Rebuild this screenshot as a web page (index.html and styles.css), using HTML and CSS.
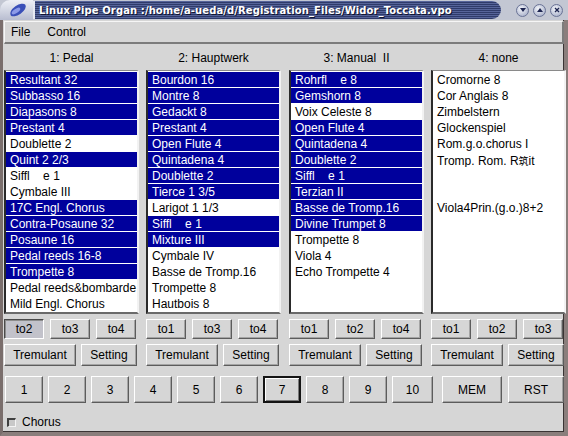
FILE: index.html
```html
<!DOCTYPE html>
<html>
<head>
<meta charset="utf-8">
<title>Linux Pipe Organ</title>
<link rel="stylesheet" href="styles.css">
</head>
<body>
<div class="win">
  <div class="titlebar">
    <div class="tcap">
      <svg width="26" height="18" viewBox="0 0 26 18">
        <ellipse cx="14" cy="9" rx="9" ry="4.5" transform="rotate(-35 14 9)" fill="#3a4fb8"/>
        <ellipse cx="12" cy="10" rx="5" ry="2" transform="rotate(-35 12 10)" fill="#8c9ae8"/>
      </svg>
    </div>
    <div class="tbar"><span class="ttext">Linux Pipe Organ :/home/a-ueda/d/Registration_Files/Widor_Toccata.vpo</span></div>
    <div class="tbtns">
      <span class="tb"><svg width="8" height="8" viewBox="0 0 8 8"><path d="M1 2 L7 2 L4 6 Z" fill="#1c2450"/></svg></span>
      <span class="tb"><svg width="8" height="8" viewBox="0 0 8 8"><path d="M1 6 L7 6 L4 2 Z" fill="#1c2450"/></svg></span>
      <span class="tb"><svg width="8" height="8" viewBox="0 0 8 8"><path d="M2 2 L6 6 M6 2 L2 6" stroke="#1c2450" stroke-width="1.3"/></svg></span>
    </div>
  </div>
  <div class="frame">
    <div class="menubar"><span class="mi">File</span><span class="mi">Control</span></div>
    <div class="cols">
      <div class="col">
        <div class="hdr">1: Pedal</div>
        <div class="list">
          <div class="row sel">Resultant 32</div>
          <div class="row sel">Subbasso 16</div>
          <div class="row sel">Diapasons 8</div>
          <div class="row sel">Prestant 4</div>
          <div class="row">Doublette 2</div>
          <div class="row sel">Quint 2 2/3</div>
          <div class="row">Siffl&nbsp;&nbsp;&nbsp; e 1</div>
          <div class="row">Cymbale III</div>
          <div class="row sel">17C Engl. Chorus</div>
          <div class="row sel">Contra-Posaune 32</div>
          <div class="row sel">Posaune 16</div>
          <div class="row sel">Pedal reeds 16-8</div>
          <div class="row sel">Trompette 8</div>
          <div class="row">Pedal reeds&amp;bombarde</div>
          <div class="row">Mild Engl. Chorus</div>
        </div>
        <div class="brow">
          <div class="btn cp down">to2</div><div class="btn cp">to3</div><div class="btn cp">to4</div>
        </div>
        <div class="brow">
          <div class="btn trem">Tremulant</div><div class="btn setg">Setting</div>
        </div>
      </div>
      <div class="col">
        <div class="hdr">2: Hauptwerk</div>
        <div class="list">
          <div class="row sel">Bourdon 16</div>
          <div class="row sel">Montre 8</div>
          <div class="row sel">Gedackt 8</div>
          <div class="row sel">Prestant 4</div>
          <div class="row sel">Open Flute 4</div>
          <div class="row sel">Quintadena 4</div>
          <div class="row sel">Doublette 2</div>
          <div class="row sel">Tierce 1 3/5</div>
          <div class="row">Larigot 1 1/3</div>
          <div class="row sel">Siffl&nbsp;&nbsp;&nbsp; e 1</div>
          <div class="row sel">Mixture III</div>
          <div class="row">Cymbale IV</div>
          <div class="row">Basse de Tromp.16</div>
          <div class="row">Trompette 8</div>
          <div class="row">Hautbois 8</div>
        </div>
        <div class="brow">
          <div class="btn cp">to1</div><div class="btn cp">to3</div><div class="btn cp">to4</div>
        </div>
        <div class="brow">
          <div class="btn trem">Tremulant</div><div class="btn setg">Setting</div>
        </div>
      </div>
      <div class="col">
        <div class="hdr">3: Manual&nbsp; II</div>
        <div class="list">
          <div class="row sel">Rohrfl&nbsp;&nbsp;&nbsp; e 8</div>
          <div class="row sel">Gemshorn 8</div>
          <div class="row">Voix Celeste 8</div>
          <div class="row sel">Open Flute 4</div>
          <div class="row sel">Quintadena 4</div>
          <div class="row sel">Doublette 2</div>
          <div class="row sel">Siffl&nbsp;&nbsp;&nbsp; e 1</div>
          <div class="row sel">Terzian II</div>
          <div class="row sel">Basse de Tromp.16</div>
          <div class="row sel">Divine Trumpet 8</div>
          <div class="row">Trompette 8</div>
          <div class="row">Viola 4</div>
          <div class="row">Echo Trompette 4</div>
        </div>
        <div class="brow">
          <div class="btn cp">to1</div><div class="btn cp">to2</div><div class="btn cp">to4</div>
        </div>
        <div class="brow">
          <div class="btn trem">Tremulant</div><div class="btn setg">Setting</div>
        </div>
      </div>
      <div class="col">
        <div class="hdr">4: none</div>
        <div class="list">
          <div class="row">Cromorne 8</div>
          <div class="row">Cor Anglais 8</div>
          <div class="row">Zimbelstern</div>
          <div class="row">Glockenspiel</div>
          <div class="row">Rom.g.o.chorus I</div>
          <div class="row">Tromp. Rom. R<span class="cjk">筑</span>it</div>
          <div class="row"></div>
          <div class="row"></div>
          <div class="row">Viola4Prin.(g.o.)8+2</div>
        </div>
        <div class="brow">
          <div class="btn cp">to1</div><div class="btn cp">to2</div><div class="btn cp">to3</div>
        </div>
        <div class="brow">
          <div class="btn trem">Tremulant</div><div class="btn setg">Setting</div>
        </div>
      </div>
    </div>
    <div class="presets">
      <div class="btn pb">1</div>
      <div class="btn pb">2</div>
      <div class="btn pb">3</div>
      <div class="btn pb">4</div>
      <div class="btn pb">5</div>
      <div class="btn pb">6</div>
      <div class="btn pb cur">7</div>
      <div class="btn pb">8</div>
      <div class="btn pb">9</div>
      <div class="btn pb ten">10</div>
      <div class="btn mem">MEM</div>
      <div class="btn rst">RST</div>
    </div>
    <div class="chorus"><span class="cb"></span><span>Chorus</span></div>
  </div>
</div>
</body>
</html>
```

FILE: styles.css
```css
* { box-sizing: border-box; }
html, body { margin: 0; padding: 0; }
body {
  width: 568px;
  height: 436px;
  overflow: hidden;
  background: #d6d6d6;
  font-family: "Liberation Sans", Arial, sans-serif;
  font-size: 12px;
  color: #000;
}
.win {
  width: 568px;
  height: 436px;
  display: flex;
  flex-direction: column;
  background: #d6d6d6;
}

/* title bar */
.titlebar {
  height: 20px;
  display: flex;
  background: #c3c7d3;
  flex: none;
}
.tcap {
  width: 33px;
  height: 20px;
  border-radius: 10px 0 0 0;
  background: linear-gradient(to bottom, #eef0f6, #b8bdd0);
  display: flex;
  align-items: center;
  justify-content: center;
}
.tbar {
  width: 468px;
  height: 18px;
  margin-top: 1px;
  border-radius: 0 9px 9px 0;
  border-left: 2px solid #e6e9f2;
  background: repeating-linear-gradient(to bottom, #56649a 0 1px, #2f3b6a 1px 2px);
  display: flex;
  align-items: center;
  padding-left: 4px;
  overflow: hidden;
}
.ttext {
  font-family: "DejaVu Sans", sans-serif;
  font-weight: bold;
  font-size: 10px;
  letter-spacing: 0.1px;
  color: #ffffff;
  white-space: nowrap;
  text-shadow: 1px 1px 0 #101430;
}
.tbtns {
  flex: 1;
  display: flex;
  align-items: center;
  justify-content: flex-end;
  gap: 4px;
  padding-right: 5px;
}
.tb {
  width: 13px;
  height: 13px;
  border-radius: 50%;
  background: radial-gradient(circle at 40% 35%, #f4f6fb, #9aa3c0);
  border: 1px solid #6a7396;
  display: flex;
  align-items: center;
  justify-content: center;
}

/* window frame */
.frame {
  flex: 1;
  display: flex;
  flex-direction: column;
  border-left: 3px solid #7a6e6c;
  border-right: 4px solid #8a7e7c;
  border-bottom: 4px solid #8a7e7c;
  box-shadow: inset -1px -1px 0 #3a3434;
  padding-top: 1px;
}

/* menu bar */
.menubar {
  height: 23px;
  margin-left: 1px;
  border-top: 1px solid #f6f6f6;
  border-left: 1px solid #f6f6f6;
  border-bottom: 2px solid #7c7c7c;
  border-right: 2px solid #7c7c7c;
  display: flex;
  align-items: center;
  padding-left: 6px;
  gap: 17px;
  flex: none;
}
.mi { font-size: 12px; }

/* columns */
.cols {
  display: grid;
  grid-template-columns: 142px 143px 142px 134px;
  padding-left: 1px;
  flex: none;
}
.col {
  display: flex;
  flex-direction: column;
}
.hdr {
  height: 26px;
  width: 135px;
  display: flex;
  align-items: center;
  justify-content: center;
  padding-top: 2px;
}
.list {
  width: 135px;
  height: 244px;
  background: #ffffff;
  border-top: 1px solid #8a8a8a;
  border-left: 2px solid #2a2a2a;
  border-right: 2px solid #f2f2f2;
  border-bottom: 2px solid #6a6a6a;
  overflow: hidden;
}
.row {
  height: 16px;
  border-top: 1px solid #ffffff;
  line-height: 17px;
  padding-left: 4px;
  white-space: nowrap;
  overflow: hidden;
}
.row.sel {
  background: #00009c;
  color: #ffffff;
}
.cjk {
  font-family: "Noto Sans CJK JP", sans-serif;
  font-size: 10px;
}

/* buttons */
.brow {
  display: flex;
  gap: 6px;
  margin-top: 5px;
}
.brow + .brow { gap: 5px; }
.btn {
  height: 20px;
  background: #d6d6d6;
  border-top: 1px solid #ffffff;
  border-left: 1px solid #ffffff;
  border-bottom: 1px solid #5c5c5c;
  border-right: 1px solid #5c5c5c;
  box-shadow: inset -1px -1px 0 #a4a4a4;
  display: flex;
  align-items: center;
  justify-content: center;
  white-space: nowrap;
}
.btn.cp { width: 40px; }
.btn.down {
  background: #c2c2ca;
  border-top: 1px solid #4a4a4a;
  border-left: 1px solid #4a4a4a;
  border-bottom: 1px solid #ffffff;
  border-right: 1px solid #ffffff;
  box-shadow: inset 1px 1px 0 #8c8c8c;
}
.btn.trem { width: 72px; height: 22px; }
.btn.setg { width: 56px; height: 22px; }

.presets {
  display: flex;
  gap: 5px;
  margin-top: 10px;
  padding-left: 2px;
}
.btn.pb { width: 38px; height: 27px; }
.btn.ten { width: 41px; }
.btn.mem { width: 60px; height: 27px; margin-left: 4px; }
.btn.rst { width: 56px; height: 27px; margin-left: 1px; }
.btn.cur {
  border: 2px solid #141414;
  box-shadow: inset 1px 1px 0 #ffffff, inset -1px -1px 0 #7a7a7a;
}

.chorus {
  display: flex;
  align-items: center;
  gap: 6px;
  margin-top: 12px;
  padding-left: 4px;
}
.cb {
  width: 9px;
  height: 9px;
  background: #c8c8c8;
  border-top: 2px solid #404040;
  border-left: 2px solid #404040;
  border-bottom: 1px solid #f4f4f4;
  border-right: 1px solid #f4f4f4;
}
```
